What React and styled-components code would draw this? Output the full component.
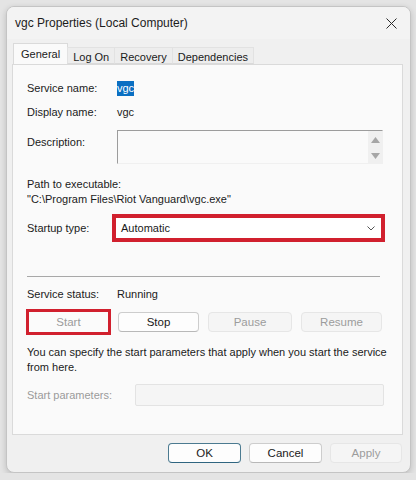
import React from "react";
import styled, { createGlobalStyle } from "styled-components";

const Global = createGlobalStyle`
  html, body { margin: 0; padding: 0; background: #e4e4e4; }
  body { font-family: "Liberation Sans", Arial, sans-serif; font-size: 11px; color: #1a1a1a; }
  * { box-sizing: border-box; }
`;

const Window = styled.div`
  margin: 6px 0 0 6px;
  width: 405px;
  height: 467px;
  border: 1px solid #c4c4c4;
  border-radius: 8px;
  background: #f0f0f0;
  box-shadow: 0 2px 6px rgba(0, 0, 0, 0.18);
  display: flex;
  flex-direction: column;
  overflow: hidden;
`;

const TitleBar = styled.div`
  height: 32px;
  display: flex;
  align-items: center;
  justify-content: space-between;
  padding: 0 9px 0 8px;
  background: #f3f3f3;
`;

const Title = styled.span`
  font-size: 12px;
  color: #1c1c1c;
`;

const CloseBtn = styled.span`
  display: flex;
  align-items: center;
  justify-content: center;
  width: 20px;
  height: 20px;
`;

const TabRow = styled.div`
  display: flex;
  align-items: flex-end;
  margin: 5px 0 0 6px;
  height: 20px;
  position: relative;
  z-index: 1;
`;

const Tab = styled.div`
  height: ${(p) => (p.$active ? "21px" : "17px")};
  padding: 0 ${(p) => (p.$active ? "7px" : "5px")};
  display: flex;
  align-items: center;
  background: ${(p) => (p.$active ? "#fafafa" : "#ededed")};
  border: 1px solid ${(p) => (p.$active ? "#dadada" : "#e2e2e2")};
  border-bottom: ${(p) => (p.$active ? "none" : "1px solid #dadada")};
  margin-left: ${(p) => (p.$active ? "0" : "-1px")};
  padding-top: ${(p) => (p.$active ? "0" : "2px")};
  color: #1a1a1a;
  font-size: 11px;
`;

const Panel = styled.div`
  margin: 0 0 0 5px;
  width: 391px;
  height: 371px;
  background: #fafafa;
  border: 1px solid #dadada;
  padding: 0 0 0 14px;
  display: flex;
  flex-direction: column;
`;

const Row = styled.div`
  display: flex;
  align-items: ${(p) => p.$align || "center"};
  height: ${(p) => p.$h || 16}px;
  margin-top: ${(p) => p.$mt || 0}px;
`;

const Label = styled.span`
  width: ${(p) => p.$w || 90}px;
  flex: none;
  color: ${(p) => (p.$disabled ? "#9a9a9a" : "#1a1a1a")};
  padding-top: ${(p) => p.$pt || 0}px;
`;

const Value = styled.span`
  color: #1a1a1a;
`;

const Selected = styled.span`
  background: #0a6fc2;
  color: #ffffff;
  padding: 1px 0 2px;
  line-height: 12px;
`;

const DescBox = styled.div`
  width: 266px;
  height: 34px;
  display: flex;
  border-top: 1px solid #9c9c9c;
  border-left: 1px solid #9c9c9c;
  border-right: 1px solid #f0f0f0;
  border-bottom: 1px solid #f0f0f0;
  background: #fafafa;
`;

const DescText = styled.div`
  flex: 1;
`;

const ScrollStrip = styled.div`
  width: 14px;
  background: #f0f0f0;
  display: flex;
  flex-direction: column;
  align-items: center;
  justify-content: space-between;
  padding: 6px 0 4px;
`;

const Block = styled.div`
  margin-top: ${(p) => p.$mt || 0}px;
  line-height: 15px;
  color: #1a1a1a;
  width: ${(p) => p.$w || "auto"};
`;

const RedFrame = styled.div`
  border: ${(p) => p.$t || 4}px solid #d1202e;
  width: ${(p) => p.$w}px;
  height: ${(p) => p.$h}px;
  display: flex;
  align-items: stretch;
  background: #ffffff;
`;

const SelectInner = styled.div`
  flex: 1;
  display: flex;
  align-items: center;
  justify-content: space-between;
  padding: 0 6px 0 5px;
  background: #ffffff;
  color: #1a1a1a;
`;

const Separator = styled.div`
  margin-top: ${(p) => p.$mt || 0}px;
  width: 353px;
  height: 1px;
  background: #a8a8a8;
`;

const ButtonRow = styled.div`
  display: flex;
  align-items: center;
  margin-top: ${(p) => p.$mt || 0}px;
  margin-left: -1px;
  height: 26px;
`;

const Button = styled.div`
  width: ${(p) => p.$w}px;
  height: ${(p) => p.$h || 20}px;
  margin-left: ${(p) => p.$ml || 0}px;
  display: flex;
  align-items: center;
  justify-content: center;
  border-radius: 4px;
  font-size: 11.5px;
  background: ${(p) => (p.$disabled ? "#f5f5f5" : "#fdfdfd")};
  border: 1px solid ${(p) => (p.$primary ? "#4b7a90" : p.$disabled ? "#e6e6e6" : "#cdcdcd")};
  border-bottom-color: ${(p) => (p.$primary ? "#2f6580" : p.$disabled ? "#e6e6e6" : "#b8b8b8")};
  color: ${(p) => (p.$disabled ? "#9c9c9c" : "#1a1a1a")};
  flex: none;
`;

const FramedButton = styled.div`
  flex: 1;
  display: flex;
  align-items: center;
  justify-content: center;
  background: #fbfbfb;
  color: #9c9c9c;
  font-size: 11.5px;
`;

const ParamInput = styled.div`
  width: 249px;
  height: 22px;
  margin-left: 18px;
  background: #f5f5f5;
  border: 1px solid #e3e3e3;
  border-radius: 2px;
`;

const Footer = styled.div`
  display: flex;
  justify-content: flex-end;
  gap: 8px;
  padding: 8px 8px 0 0;
`;

const App = () => (
  <>
    <Global />
    <Window>
      <TitleBar>
        <Title>vgc Properties (Local Computer)</Title>
        <CloseBtn>
          <svg width="11" height="11" viewBox="0 0 11 11">
            <path d="M0.5 0.5 L10.5 10.5 M10.5 0.5 L0.5 10.5" stroke="#2a2a2a" strokeWidth="1" fill="none" />
          </svg>
        </CloseBtn>
      </TitleBar>
      <TabRow>
        <Tab $active>General</Tab>
        <Tab>Log On</Tab>
        <Tab>Recovery</Tab>
        <Tab>Dependencies</Tab>
      </TabRow>
      <Panel>
        <Row $mt={15}>
          <Label>Service name:</Label>
          <Selected>vgc</Selected>
        </Row>
        <Row $mt={8}>
          <Label>Display name:</Label>
          <Value>vgc</Value>
        </Row>
        <Row $mt={10} $h={35} $align="flex-start">
          <Label $pt={6}>Description:</Label>
          <DescBox>
            <DescText />
            <ScrollStrip>
              <svg width="9" height="6" viewBox="0 0 9 6"><path d="M4.5 0 L9 6 L0 6 Z" fill="#a6a6a6" /></svg>
              <svg width="9" height="6" viewBox="0 0 9 6"><path d="M0 0 L9 0 L4.5 6 Z" fill="#a6a6a6" /></svg>
            </ScrollStrip>
          </DescBox>
        </Row>
        <Block $mt={12}>
          Path to executable:
          <br />
          "C:\Program Files\Riot Vanguard\vgc.exe"
        </Block>
        <Row $mt={7} $h={28}>
          <Label $w={85}>Startup type:</Label>
          <RedFrame $w={273} $h={28} $t={4}>
            <SelectInner>
              <span>Automatic</span>
              <svg width="8" height="5" viewBox="0 0 8 5">
                <path d="M0.5 0.5 L4 4 L7.5 0.5" stroke="#555" strokeWidth="1" fill="none" />
              </svg>
            </SelectInner>
          </RedFrame>
        </Row>
        <Separator $mt={34} />
        <Row $mt={9}>
          <Label>Service status:</Label>
          <Value>Running</Value>
        </Row>
        <ButtonRow $mt={7}>
          <RedFrame $w={85} $h={26} $t={3}>
            <FramedButton>Start</FramedButton>
          </RedFrame>
          <Button $w={81} $ml={7}>Stop</Button>
          <Button $w={84} $ml={9} $disabled>Pause</Button>
          <Button $w={81} $ml={9} $disabled>Resume</Button>
        </ButtonRow>
        <Block $mt={10} $w="360px">
          You can specify the start parameters that apply when you start the service from here.
        </Block>
        <Row $mt={9} $h={22}>
          <Label $w={90} $disabled>Start parameters:</Label>
          <ParamInput />
        </Row>
      </Panel>
      <Footer>
        <Button $w={73} $h={20} $primary>OK</Button>
        <Button $w={73} $h={20}>Cancel</Button>
        <Button $w={72} $h={20} $disabled>Apply</Button>
      </Footer>
    </Window>
  </>
);

export default App;
